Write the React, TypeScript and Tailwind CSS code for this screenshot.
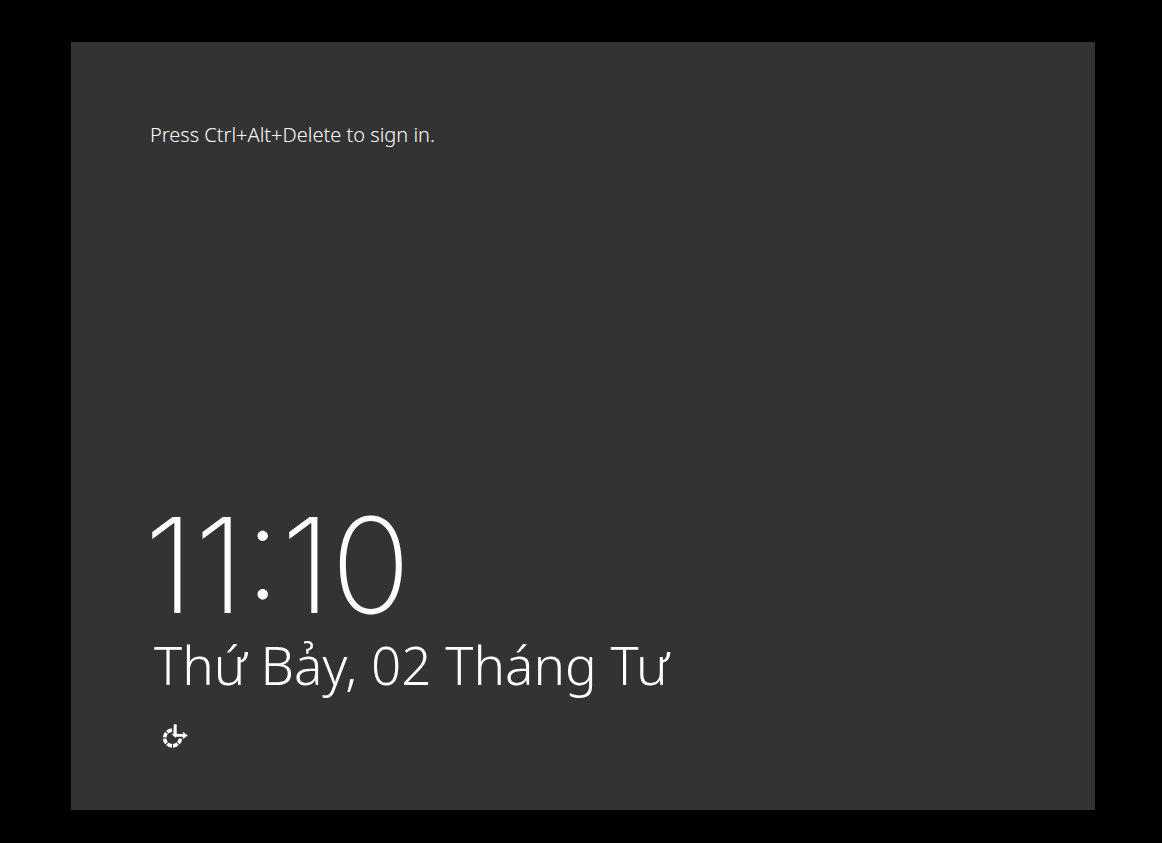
import React from "react";

function EaseOfAccessIcon() {
  return (
    <svg viewBox="0 0 28 28" className="size-7" fill="none" stroke="currentColor" aria-hidden="true">
      <circle cx="11.5" cy="16" r="7.9" strokeWidth="3.6" pathLength="88" strokeDasharray="9 2" strokeDashoffset="-1" />
      <path d="M11.8 1H28v14.9H13z" fill="#333333" stroke="none" />
      <path d="M12.7 2.3h3v9.4h2.2l-3.7 4.1-3.7-4.1h2.2z" fill="currentColor" stroke="none" />
      <path d="M15.5 12.1h6.4v-2.3l5 3.6-5 3.6v-2.3h-6.9z" fill="currentColor" stroke="none" />
    </svg>
  );
}

export default function App() {
  return (
    <div className="flex min-h-screen bg-black pt-[42px] pr-[67px] pb-[33px] pl-[71px] font-['Noto_Sans',sans-serif] text-white">
      <main className="flex flex-1 flex-col items-start bg-[#333333] px-[79px] pt-[79px] pb-[60px]">
        <p className="text-xl leading-7 font-light">Press Ctrl+Alt+Delete to sign in.</p>
        <div className="mt-auto -ml-1.5">
          <time className="block font-['Inter',sans-serif] text-[132px] leading-[132px] font-extralight">11:10</time>
          <p className="pl-2.5 text-[53px] leading-[68px] font-light">Thứ Bảy, 02 Tháng Tư</p>
        </div>
        <button type="button" aria-label="Ease of access" className="mt-[23px] ml-[11px]">
          <EaseOfAccessIcon />
        </button>
      </main>
    </div>
  );
}
